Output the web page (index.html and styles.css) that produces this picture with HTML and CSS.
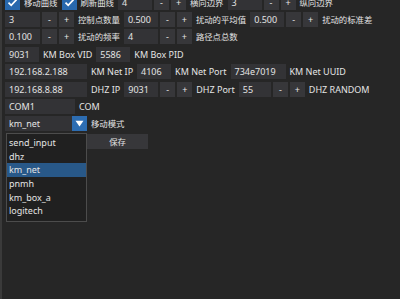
FILE: index.html
```html
<!DOCTYPE html>
<html>
<head>
<meta charset="utf-8">
<link rel="stylesheet" href="styles.css">
</head>
<body>
<div class="window">
  <div class="content">
    <div class="row">
      <span class="check"><svg viewBox="0 0 15 15" width="15" height="15"><polyline points="3.5,7.6 6.2,10.3 11.5,4.6" fill="none" stroke="#ffffff" stroke-width="1.7"/></svg></span>
      <span class="label cjk">移动曲线</span>
      <span class="check"><svg viewBox="0 0 15 15" width="15" height="15"><polyline points="3.5,7.6 6.2,10.3 11.5,4.6" fill="none" stroke="#ffffff" stroke-width="1.7"/></svg></span>
      <span class="label cjk">刷新曲线</span>
      <span class="step"><span class="frame w34">4</span><span class="btn">-</span><span class="btn">+</span></span>
      <span class="label cjk">横向边界</span>
      <span class="step"><span class="frame w34">3</span><span class="btn">-</span><span class="btn">+</span></span>
      <span class="label cjk">纵向边界</span>
    </div>
    <div class="row">
      <span class="step"><span class="frame w35">3</span><span class="btn">-</span><span class="btn">+</span></span>
      <span class="label cjk">控制点数量</span>
      <span class="step"><span class="frame w34">0.500</span><span class="btn">-</span><span class="btn">+</span></span>
      <span class="label cjk">扰动的平均值</span>
      <span class="step"><span class="frame w34">0.500</span><span class="btn">-</span><span class="btn">+</span></span>
      <span class="label cjk">扰动的标准差</span>
    </div>
    <div class="row">
      <span class="step"><span class="frame w35">0.100</span><span class="btn">-</span><span class="btn">+</span></span>
      <span class="label cjk">扰动的频率</span>
      <span class="step"><span class="frame w34">4</span><span class="btn">-</span><span class="btn">+</span></span>
      <span class="label cjk">路径点总数</span>
    </div>
    <div class="row">
      <span class="frame w34">9031</span>
      <span class="label">KM Box VID</span>
      <span class="frame w34">5586</span>
      <span class="label">KM Box PID</span>
    </div>
    <div class="row">
      <span class="frame w82">192.168.2.188</span>
      <span class="label">KM Net IP</span>
      <span class="frame w34">4106</span>
      <span class="label">KM Net Port</span>
      <span class="frame w55">734e7019</span>
      <span class="label">KM Net UUID</span>
    </div>
    <div class="row">
      <span class="frame w82">192.168.8.88</span>
      <span class="label">DHZ IP</span>
      <span class="step"><span class="frame w34">9031</span><span class="btn">-</span><span class="btn">+</span></span>
      <span class="label">DHZ Port</span>
      <span class="step"><span class="frame w32">55</span><span class="btn">-</span><span class="btn">+</span></span>
      <span class="label">DHZ RANDOM</span>
    </div>
    <div class="row">
      <span class="frame w70">COM1</span>
      <span class="label">COM</span>
    </div>
    <div class="row">
      <span class="combo"><span class="frame w67">km_net</span><span class="arrow"><svg viewBox="0 0 15 15" width="15" height="15"><polygon points="3.5,4.8 11.5,4.8 7.5,10.6" fill="#ffffff"/></svg></span></span>
      <span class="label cjk">移动模式</span>
    </div>
    <div class="row">
      <span class="spacer"></span>
      <span class="button cjk">保存</span>
    </div>
  </div>
  <div class="popup">
    <div class="item">send_input</div>
    <div class="item">dhz</div>
    <div class="item selected">km_net</div>
    <div class="item">pnmh</div>
    <div class="item">km_box_a</div>
    <div class="item">logitech</div>
  </div>
</div>
</body>
</html>
```
FILE: styles.css
```css
html, body {
  margin: 0;
  padding: 0;
}
body {
  width: 400px;
  height: 299px;
  overflow: hidden;
  background: #262626;
  color: #e4e4e4;
  font-family: "Noto Sans", "Noto Sans CJK SC", sans-serif;
  font-size: 9px;
}
.window {
  position: relative;
  height: 299px;
  box-sizing: border-box;
  border-left: 2px solid #3a3a3a;
  padding-left: 3px;
  overflow: hidden;
}
.content {
  display: flex;
  flex-direction: column;
  gap: 2.4px;
  margin-top: -5.4px;
}
.row {
  display: flex;
  align-items: center;
  gap: 4px;
  height: 15px;
  white-space: nowrap;
}
.label {
  line-height: 15px;
}
.cjk {
  font-family: "Noto Sans CJK SC", sans-serif;
  font-size: 8.4px;
}
.step {
  display: flex;
  gap: 2px;
}
.frame {
  display: block;
  box-sizing: border-box;
  height: 15px;
  line-height: 15px;
  padding-left: 4px;
  background: #333336;
  overflow: hidden;
}
.w32 { width: 32px; }
.w34 { width: 34px; }
.w35 { width: 35px; }
.w55 { width: 55px; }
.w67 { width: 67px; }
.w70 { width: 70px; }
.w82 { width: 82px; }
.btn {
  display: block;
  width: 15px;
  height: 15px;
  line-height: 15px;
  text-align: center;
  background: #37373a;
}
.check {
  display: block;
  width: 15px;
  height: 15px;
  background: #2868ad;
}
.check svg, .arrow svg {
  display: block;
}
.combo {
  display: flex;
}
.arrow {
  display: block;
  width: 15px;
  height: 15px;
  background: #2d6db2;
}
.spacer {
  display: block;
  width: 78px;
  height: 15px;
}
.button {
  display: block;
  width: 61px;
  height: 15px;
  line-height: 15px;
  text-align: center;
  background: #37373a;
}
.popup {
  position: absolute;
  left: 4px;
  top: 133px;
  width: 81px;
  box-sizing: border-box;
  padding: 2.2px 0 3px;
  background: #202020;
  border: 1px solid #4c4c4c;
}
.item {
  height: 13.6px;
  line-height: 13.6px;
  padding-left: 2px;
}
.item.selected {
  background: #285888;
}
```
